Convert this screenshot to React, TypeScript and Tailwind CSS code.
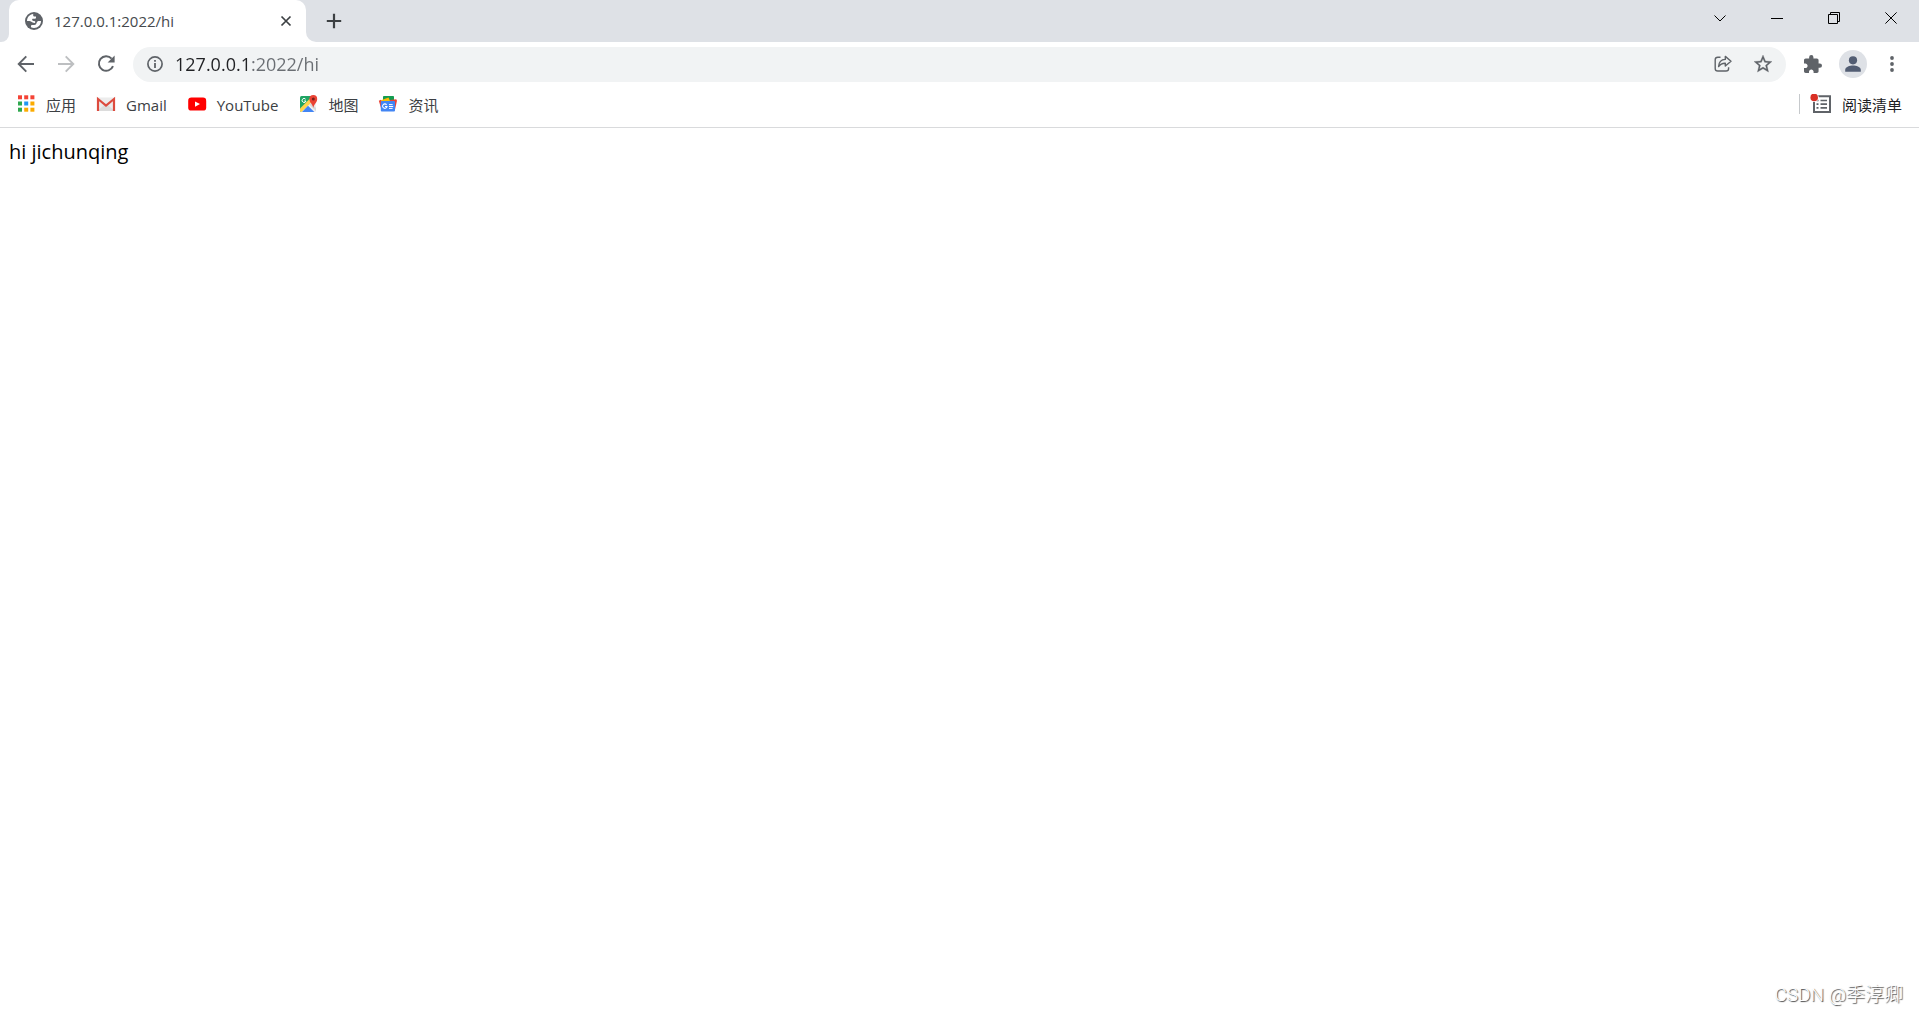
import React, { useState } from 'react';

const bookmarks = [
  { label: '应用', href: '#apps', icon: <AppsIcon /> },
  { label: 'Gmail', href: '#gmail', icon: <GmailIcon /> },
  { label: 'YouTube', href: '#youtube', icon: <YouTubeIcon /> },
  { label: '地图', href: '#maps', icon: <MapsIcon /> },
  { label: '资讯', href: '#news', icon: <NewsIcon /> },
];

function AppsIcon() {
  const colors = ['#f44336', '#f44336', '#f44336', '#2fa84f', '#2196f3', '#fbab00', '#2fa84f', '#fbab00', '#fbab00'];
  return (
    <svg viewBox="0 0 20 20" className="size-5" aria-hidden="true">
      {colors.map((color, i) => (
        <rect key={i} x={2 + (i % 3) * 6.2} y={1.3 + Math.floor(i / 3) * 6.2} width="4" height="4" fill={color} />
      ))}
    </svg>
  );
}

function GmailIcon() {
  return (
    <svg viewBox="0 0 20 20" className="size-5" aria-hidden="true">
      <rect x="1" y="3.5" width="18" height="13.5" rx="1" fill="#ececec" />
      <path d="M3 15.5 L10 9.5 L17 15.5 V17 H3 Z" fill="#dcdcdc" />
      <path d="M2 17 V5 L10 11.5 L18 5 V17" fill="none" stroke="#dd4b3e" strokeWidth="2.2" />
    </svg>
  );
}

function YouTubeIcon() {
  return (
    <svg viewBox="0 0 20 20" className="size-5" aria-hidden="true">
      <rect x="1.2" y="3.6" width="18" height="13" rx="3.2" fill="#ff0000" />
      <path d="M8 7.4 L13 10.1 L8 12.8 Z" fill="#fff" />
    </svg>
  );
}

function MapsIcon() {
  return (
    <svg viewBox="0 0 20 20" className="size-5" aria-hidden="true">
      <rect x="2" y="2" width="16" height="16" rx="1.5" fill="#f1f1f1" />
      <path d="M3.5 2 H15 V5 L2 18 V3.5 Q2 2 3.5 2 Z" fill="#1fa463" />
      <path d="M2 14.5 L13 3.5 L15.5 6.5 L3.5 18 Q2 18 2 16.5 Z" fill="#ffd34d" />
      <path d="M4 18 L10 11.8 L16.3 18 Z" fill="#4285f4" />
      <path d="M11.2 10.8 L13 9 L18 14 V17 Z" fill="#d9d9d9" />
      <path d="M7.6 5.2 A2 2 0 1 0 8 7 H6.2" fill="none" stroke="#fff" strokeWidth="1" />
      <path d="M15.3 14 C15 10.5 11.4 8.8 11.4 5 A3.9 4 0 0 1 19.2 5 C19.2 8.8 15.6 10.5 15.3 14 Z" fill="#ea4335" />
      <circle cx="15.3" cy="5" r="1.5" fill="#7b1f1a" />
    </svg>
  );
}

function NewsIcon() {
  return (
    <svg viewBox="0 0 20 20" className="size-5" aria-hidden="true">
      <rect x="5" y="2" width="11" height="8" rx="0.8" fill="#149c50" />
      <path d="M3 6.2 L10.5 3.4 L13 9 L4 12 Z" fill="#fbbc04" />
      <path d="M12 6 L18.2 5.2 L19 6.4 L17 15.5 H10 Z" fill="#ea4335" />
      <path d="M0.8 6.8 L3 5.8 L5 14 H3 Z" fill="#ea4335" />
      <rect x="2.8" y="7" width="14.2" height="10.6" rx="1" fill="#4285f4" />
      <path d="M8.6 10.8 A2.2 2.2 0 1 0 9 12.5 H7" fill="none" stroke="#fff" strokeWidth="1.1" />
      <path d="M11 10.6 H14.6 M11 12.5 H15.2 M11 14.4 H14.6" stroke="#fff" strokeWidth="1" />
    </svg>
  );
}

function GlobeIcon() {
  return (
    <svg viewBox="0 0 18 18" className="size-[18px] shrink-0" aria-hidden="true">
      <circle cx="9" cy="9" r="9" fill="#5f6368" />
      <path d="M2 9 C2 5.4 4.6 2.4 8.2 2 V3.4 C8.2 4.2 8.8 4.4 9.6 4.4 H11 V5.4 C11 6.4 10.4 6.8 9.4 6.8 H8 C7.2 6.8 7 7.4 7.2 8 C7.4 8.8 8.2 9 9.2 9 C10.4 9.2 10.6 10.2 10 10.8 C9 11.4 7.6 10.6 6.4 9.8 C5.2 9 3.6 9 2 9 Z" fill="#fff" />
      <path d="M6 15.3 V14 C6 13.2 6.6 12.9 7.4 12.9 H9.2 C10.6 12.8 11.2 12 11.6 10.9 C12 9.6 12.8 9 14 9 H16 C16 12.9 12.9 16 9 16 C7.9 16 6.900 15.800 6 15.300 Z" fill="#fff" />
    </svg>
  );
}

function WindowButton({ label, children }: { label: string; children: React.ReactNode }) {
  return (
    <button type="button" aria-label={label} className="flex h-9 w-[57px] items-center justify-center hover:bg-black/10">
      <svg viewBox="0 0 12 12" className="size-3" fill="none" stroke="#000" strokeWidth="1" aria-hidden="true">
        {children}
      </svg>
    </button>
  );
}

function ToolButton({ label, children }: { label: string; children: React.ReactNode }) {
  return (
    <button type="button" aria-label={label} className="flex size-9 shrink-0 items-center justify-center rounded-full hover:bg-gray-100">
      {children}
    </button>
  );
}

function TabStrip() {
  return (
    <div className="flex h-[42px] bg-[#dee1e6]">
      <div className="flex w-[9px] bg-white">
        <div className="w-full rounded-br-lg bg-[#dee1e6]" />
      </div>
      <div className="bg-[#dee1e6]">
        <div className="flex h-full w-[297px] items-center rounded-t-[10px] bg-white pr-3 pl-4">
          <GlobeIcon />
          <span className="ml-[11px] grow text-[15px] text-[#45494d]">127.0.0.1:2022/hi</span>
          <button type="button" aria-label="Close tab" className="flex size-4 items-center justify-center">
            <svg viewBox="0 0 12 12" className="size-3" aria-hidden="true">
              <path d="M1.5 1.5 L10.5 10.5 M10.5 1.5 L1.5 10.5" stroke="#3c4043" strokeWidth="1.7" />
            </svg>
          </button>
        </div>
      </div>
      <div className="grow bg-white">
        <div className="flex h-full justify-between rounded-bl-[10px] bg-[#dee1e6]">
          <button type="button" aria-label="New tab" className="ml-[10px] flex h-[42px] w-9 items-center justify-center">
            <svg viewBox="0 0 16 16" className="size-4" aria-hidden="true">
              <path d="M8 0.8 V15.2 M0.8 8 H15.2" stroke="#3c4043" strokeWidth="2.2" />
            </svg>
          </button>
          <div className="flex">
            <WindowButton label="Search tabs">
              <path d="M0.5 3.5 L6 9 L11.5 3.5" />
            </WindowButton>
            <WindowButton label="Minimize">
              <path d="M0 6.5 H12" />
            </WindowButton>
            <WindowButton label="Restore">
              <path d="M0.5 2.5 H9.5 V11.5 H0.5 Z M2.5 2.5 V0.5 H11.5 V9.5 H9.5" />
            </WindowButton>
            <WindowButton label="Close">
              <path d="M0.4 0.4 L11.6 11.6 M11.6 0.4 L0.4 11.6" />
            </WindowButton>
          </div>
        </div>
      </div>
    </div>
  );
}

function Toolbar() {
  const [url, setUrl] = useState('127.0.0.1:2022/hi');

  return (
    <div className="flex h-[45px] items-center gap-1 bg-white px-2 pb-px">
      <ToolButton label="Back">
        <svg viewBox="0 0 18 18" className="size-[18px]" fill="none" stroke="#5f6368" strokeWidth="1.9" aria-hidden="true">
          <path d="M17 9 H2 M9.3 1.4 L1.7 9 L9.3 16.6" />
        </svg>
      </ToolButton>
      <ToolButton label="Forward">
        <svg viewBox="0 0 18 18" className="size-[18px]" fill="none" stroke="#bdbfc1" strokeWidth="1.9" aria-hidden="true">
          <path d="M1 9 H16 M8.7 1.4 L16.3 9 L8.7 16.6" />
        </svg>
      </ToolButton>
      <ToolButton label="Reload">
        <svg viewBox="0 0 18 18" className="size-[18px]" aria-hidden="true">
          <path d="M14.6 3.6 A7.3 7.3 0 1 0 16 11.2" fill="none" stroke="#5f6368" strokeWidth="2" />
          <path d="M17.6 0.6 V7.6 H10.6 Z" fill="#5f6368" />
        </svg>
      </ToolButton>

      <div className="mx-[5px] flex h-[35px] min-w-0 grow items-center gap-1 rounded-full bg-[#f1f3f4] pr-[5px] pl-[14px]">
        <button type="button" aria-label="Site information" className="shrink-0">
          <svg viewBox="0 0 16 16" className="size-4" aria-hidden="true">
            <circle cx="8" cy="8" r="7.1" fill="none" stroke="#5f6368" strokeWidth="1.7" />
            <path d="M8 7 V12 M8 4 V5.7" stroke="#5f6368" strokeWidth="1.8" />
          </svg>
        </button>
        <input
          type="text"
          aria-label="Address"
          value={url}
          onChange={(e) => setUrl(e.target.value)}
          className="ml-2 min-w-0 grow bg-[linear-gradient(to_right,#202124_76px,#6a6e73_76px)] bg-clip-text text-[18px] leading-6 text-transparent caret-black outline-none"
        />
        <ToolButton label="Share">
          <svg viewBox="0 0 18 18" className="size-[18px]" fill="none" stroke="#5f6368" strokeWidth="1.4" strokeLinejoin="round" aria-hidden="true">
            <path d="M6.5 2.2 H3.8 Q1.2 2.2 1.2 4.8 V13.4 Q1.2 16 3.8 16 H12 Q14.6 16 14.6 13.4 V12.2" />
            <path d="M4.6 11.6 C4.8 7.2 7 4.6 11.3 4.4 V1.4 L17 6.2 L11.3 11 V8.2 C8.4 8.1 6.2 9.2 4.6 11.6 Z" />
          </svg>
        </ToolButton>
        <ToolButton label="Bookmark this tab">
          <svg viewBox="2 2 20 20" className="size-[18px]" fill="#5f6368" stroke="#5f6368" strokeWidth="0.3" aria-hidden="true">
            <path d="M22 9.24l-7.19-.62L12 2 9.19 8.63 2 9.24l5.46 4.73L5.82 21 12 17.27 18.18 21l-1.63-7.03L22 9.24zM12 15.4l-3.76 2.27 1-4.28-3.32-2.88 4.38-.38L12 6.1l1.71 4.04 4.38.38-3.32 2.88 1 4.28L12 15.4z" />
          </svg>
        </ToolButton>
      </div>

      <ToolButton label="Extensions">
        <svg viewBox="2 1 21 21" className="size-[18px]" fill="#5f6368" aria-hidden="true">
          <path d="M20.5 11H19V7c0-1.1-.9-2-2-2h-4V3.5a2.5 2.5 0 0 0-5 0V5H4c-1.1 0-1.99.9-1.99 2v3.8H3.5c1.49 0 2.7 1.21 2.7 2.7s-1.21 2.7-2.7 2.7H2V20c0 1.1.9 2 2 2h3.8v-1.5c0-1.49 1.21-2.7 2.7-2.7 1.49 0 2.7 1.21 2.7 2.7V22H17c1.1 0 2-.9 2-2v-4h1.5a2.5 2.5 0 0 0 0-5z" />
        </svg>
      </ToolButton>
      <ToolButton label="Profile">
        <svg viewBox="0 0 28 28" className="size-7" aria-hidden="true">
          <circle cx="14" cy="14" r="14" fill="#dee1e6" />
          <circle cx="14" cy="10.3" r="4.1" fill="#525d73" />
          <path d="M6.2 21.8 V19.8 C6.2 17 11 15.6 14 15.6 C17 15.6 21.8 17 21.8 19.8 V21.8 Z" fill="#525d73" />
        </svg>
      </ToolButton>
      <ToolButton label="Menu">
        <svg viewBox="0 0 18 18" className="size-[18px]" fill="#5f6368" aria-hidden="true">
          <circle cx="8" cy="3" r="1.9" />
          <circle cx="8" cy="9" r="1.9" />
          <circle cx="8" cy="15" r="1.9" />
        </svg>
      </ToolButton>
    </div>
  );
}

function BookmarksBar() {
  return (
    <nav className="flex h-[41px] items-center justify-between border-b border-[#d9dadc] bg-white pr-[17px] pb-[6px] pl-4 text-[15px] leading-5 text-[#3c4043]">
      <div className="flex gap-5">
        {bookmarks.map((bookmark) => (
          <a key={bookmark.label} href={bookmark.href} className="flex items-start gap-[10px]">
            {bookmark.icon}
            <span className="pt-px">{bookmark.label}</span>
          </a>
        ))}
      </div>
      <div className="flex items-start gap-[10px]">
        <div className="h-5 w-px bg-[#c6c9cc]" />
        <button type="button" className="flex items-start gap-[10px] text-[#202124]">
          <svg viewBox="0 0 22 20" className="h-5 w-[22px]" aria-hidden="true">
            <path d="M3 2.3 H20 V18 H4 V2" fill="none" stroke="#5f6368" strokeWidth="2" />
            <path d="M6.5 6.5 H8.5 M6.5 10.2 H8.5 M6.5 13.9 H8.5 M10.5 6.5 H17 M10.5 10.2 H17 M10.5 13.9 H17" stroke="#5f6368" strokeWidth="1.7" />
            <circle cx="4.2" cy="3.4" r="4.6" fill="#fff" />
            <circle cx="4.2" cy="3.4" r="3.8" fill="#d93025" />
          </svg>
          <span className="pt-px">阅读清单</span>
        </button>
      </div>
    </nav>
  );
}

function App() {
  return (
    <div className="flex min-h-screen flex-col bg-white font-['Open_Sans','Noto_Sans_CJK_SC',sans-serif]">
      <header>
        <TabStrip />
        <Toolbar />
        <BookmarksBar />
      </header>
      <main className="grow px-[9px] py-[10px]">
        <p className="text-[20px] leading-7 text-black">hi jichunqing</p>
      </main>
      <footer className="flex justify-end px-4 pb-[6px]">
        <span className="font-['Roboto','Noto_Sans_CJK_SC',sans-serif] text-[19px] leading-6 font-light text-white [text-shadow:1px_1px_1px_#444]">CSDN @季淳卿</span>
      </footer>
    </div>
  );
}

export default App;
